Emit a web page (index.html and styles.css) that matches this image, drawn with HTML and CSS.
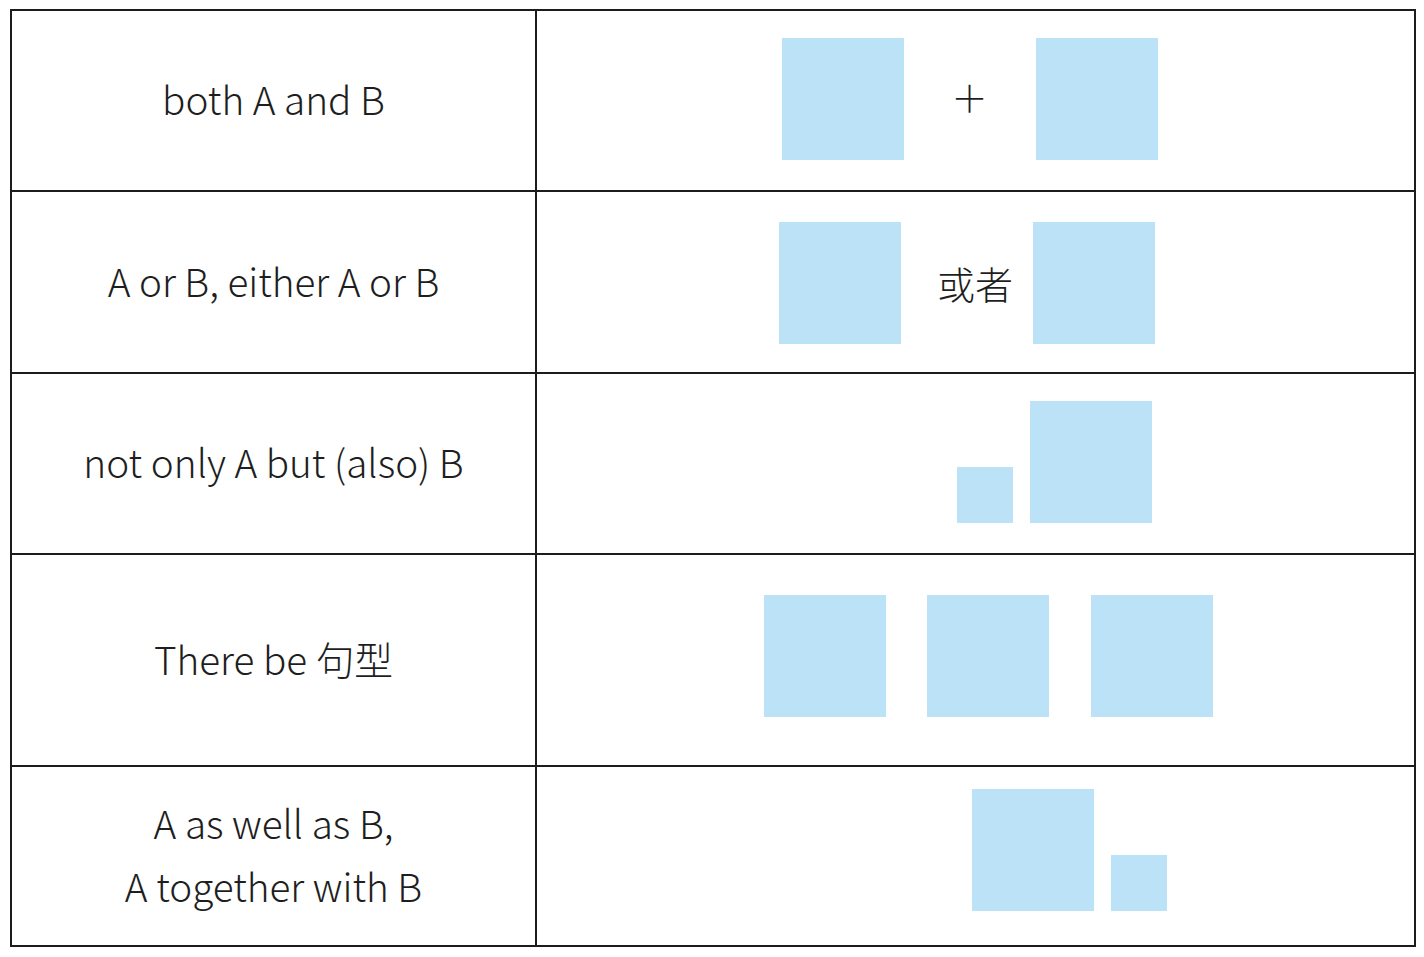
FILE: index.html
```html
<!DOCTYPE html>
<html lang="en">
<head>
<meta charset="utf-8">
<title>Conjunctions</title>
<link rel="stylesheet" href="styles.css">
</head>
<body>
<div class="table">
  <div class="cell label r1">both A and B</div>
  <div class="cell pic pic-1">
    <div class="sq"></div>
    <div class="gap-sign"><span class="plus">＋</span></div>
    <div class="sq"></div>
  </div>

  <div class="cell label r2">A or B, either A or B</div>
  <div class="cell pic pic-2">
    <div class="sq"></div>
    <div class="gap-sign"><span class="or">或者</span></div>
    <div class="sq"></div>
  </div>

  <div class="cell label r3">not only A but (also) B</div>
  <div class="cell pic pic-3">
    <div class="pair pair-up">
      <div class="sq sq-small"></div>
      <div class="sq"></div>
    </div>
  </div>

  <div class="cell label r4">There be 句型</div>
  <div class="cell pic pic-4">
    <div class="sq"></div>
    <div class="sq"></div>
    <div class="sq sq-last"></div>
  </div>

  <div class="cell label r5">A as well as B,<br>A together with B</div>
  <div class="cell pic pic-5">
    <div class="pair">
      <div class="sq"></div>
      <div class="sq sq-small"></div>
    </div>
  </div>
</div>
</body>
</html>
```
FILE: styles.css
```css
html, body {
  margin: 0;
  padding: 0;
  background: #ffffff;
}

body {
  font-family: "Noto Sans CJK SC", "Noto Sans", sans-serif;
  font-weight: 300;
  color: #1e1e1e;
  padding: 9px 0 0 10px;
}

.table {
  width: 1406px;
  box-sizing: border-box;
  display: grid;
  grid-template-columns: 523px 877px;
  grid-template-rows: 179px 180px 179px 210px 178px;
  gap: 2px;
  padding: 2px;
  background: #1c1c1c;
}

.cell {
  background: #ffffff;
}

.label {
  display: flex;
  align-items: center;
  justify-content: center;
  text-align: center;
  font-size: 38.7px;
  line-height: 63px;
  box-sizing: border-box;
  padding-bottom: 4px;
}

.pic {
  display: flex;
  align-items: center;
  box-sizing: border-box;
}

.sq {
  width: 122px;
  height: 122px;
  background: #bce2f7;
  flex: none;
}

.sq-small {
  width: 56px;
  height: 56px;
}

.gap-sign {
  width: 132px;
  flex: none;
  display: flex;
  align-items: center;
}

.plus {
  font-size: 37px;
  line-height: 1;
  margin-left: 47px;
  padding-bottom: 4px;
}

.or {
  font-size: 38px;
  line-height: 1;
  margin-left: 36px;
}

.pair {
  display: flex;
  align-items: flex-end;
  gap: 17px;
}

.pic-1 { padding-left: 245px; padding-bottom: 3px; }
.pic-2 { padding-left: 242px; padding-top: 2px; }
.pic-3 { padding-left: 420px; padding-bottom: 3px; }
.pic-4 { padding-left: 227px; gap: 41px; padding-bottom: 8px; }
.pic-4 .sq-last { margin-left: 1px; }
.pic-5 { padding-left: 435px; padding-bottom: 12px; }
```
